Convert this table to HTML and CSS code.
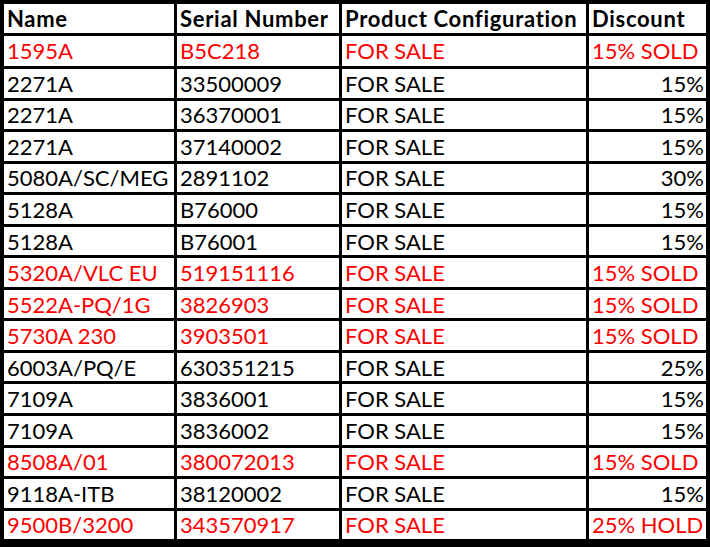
FILE: index.html
```html
<!DOCTYPE html>
<html>
<head>
<meta charset="utf-8">
<link rel="stylesheet" href="styles.css">
</head>
<body>
<div class="sheet">
  <div class="cell head">Name</div>
  <div class="cell head">Serial Number</div>
  <div class="cell head">Product Configuration</div>
  <div class="cell head">Discount</div>

  <div class="cell red">1595A</div><div class="cell red">B5C218</div><div class="cell red">FOR SALE</div><div class="cell red">15% SOLD</div>
  <div class="cell">2271A</div><div class="cell">33500009</div><div class="cell">FOR SALE</div><div class="cell num">15%</div>
  <div class="cell">2271A</div><div class="cell">36370001</div><div class="cell">FOR SALE</div><div class="cell num">15%</div>
  <div class="cell">2271A</div><div class="cell">37140002</div><div class="cell">FOR SALE</div><div class="cell num">15%</div>
  <div class="cell">5080A/SC/MEG</div><div class="cell">2891102</div><div class="cell">FOR SALE</div><div class="cell num">30%</div>
  <div class="cell">5128A</div><div class="cell">B76000</div><div class="cell">FOR SALE</div><div class="cell num">15%</div>
  <div class="cell">5128A</div><div class="cell">B76001</div><div class="cell">FOR SALE</div><div class="cell num">15%</div>
  <div class="cell red">5320A/VLC EU</div><div class="cell red">519151116</div><div class="cell red">FOR SALE</div><div class="cell red">15% SOLD</div>
  <div class="cell red">5522A-PQ/1G</div><div class="cell red">3826903</div><div class="cell red">FOR SALE</div><div class="cell red">15% SOLD</div>
  <div class="cell red">5730A 230</div><div class="cell red">3903501</div><div class="cell red">FOR SALE</div><div class="cell red">15% SOLD</div>
  <div class="cell">6003A/PQ/E</div><div class="cell">630351215</div><div class="cell">FOR SALE</div><div class="cell num">25%</div>
  <div class="cell">7109A</div><div class="cell">3836001</div><div class="cell">FOR SALE</div><div class="cell num">15%</div>
  <div class="cell">7109A</div><div class="cell">3836002</div><div class="cell">FOR SALE</div><div class="cell num">15%</div>
  <div class="cell red">8508A/01</div><div class="cell red">380072013</div><div class="cell red">FOR SALE</div><div class="cell red">15% SOLD</div>
  <div class="cell">9118A-ITB</div><div class="cell">38120002</div><div class="cell">FOR SALE</div><div class="cell num">15%</div>
  <div class="cell red">9500B/3200</div><div class="cell red">343570917</div><div class="cell red">FOR SALE</div><div class="cell red">25% HOLD</div>
</div>
</body>
</html>
```
FILE: styles.css
```css
html, body {
  margin: 0;
  padding: 0;
  background: #ffffff;
}
.sheet {
  box-sizing: border-box;
  width: 710px;
  height: 547px;
  background: #000000;
  padding: 4px 4px 0 4px;
  display: grid;
  grid-template-columns: 170px 162px 244px 117px;
  grid-template-rows: 28.5px 30.5px repeat(15, 28.56px);
  column-gap: 3px;
  row-gap: 3px;
  font-family: Lato, "Open Sans", sans-serif;
  font-size: 22px;
  color: #000000;
}
.cell {
  background: #ffffff;
  display: flex;
  align-items: center;
  padding: 0 2px 0 3px;
  white-space: nowrap;
  overflow: hidden;
}
.head {
  font-weight: bold;
  letter-spacing: 0.7px;
}
.red {
  color: #ff0000;
}
.num {
  justify-content: flex-end;
}
```
